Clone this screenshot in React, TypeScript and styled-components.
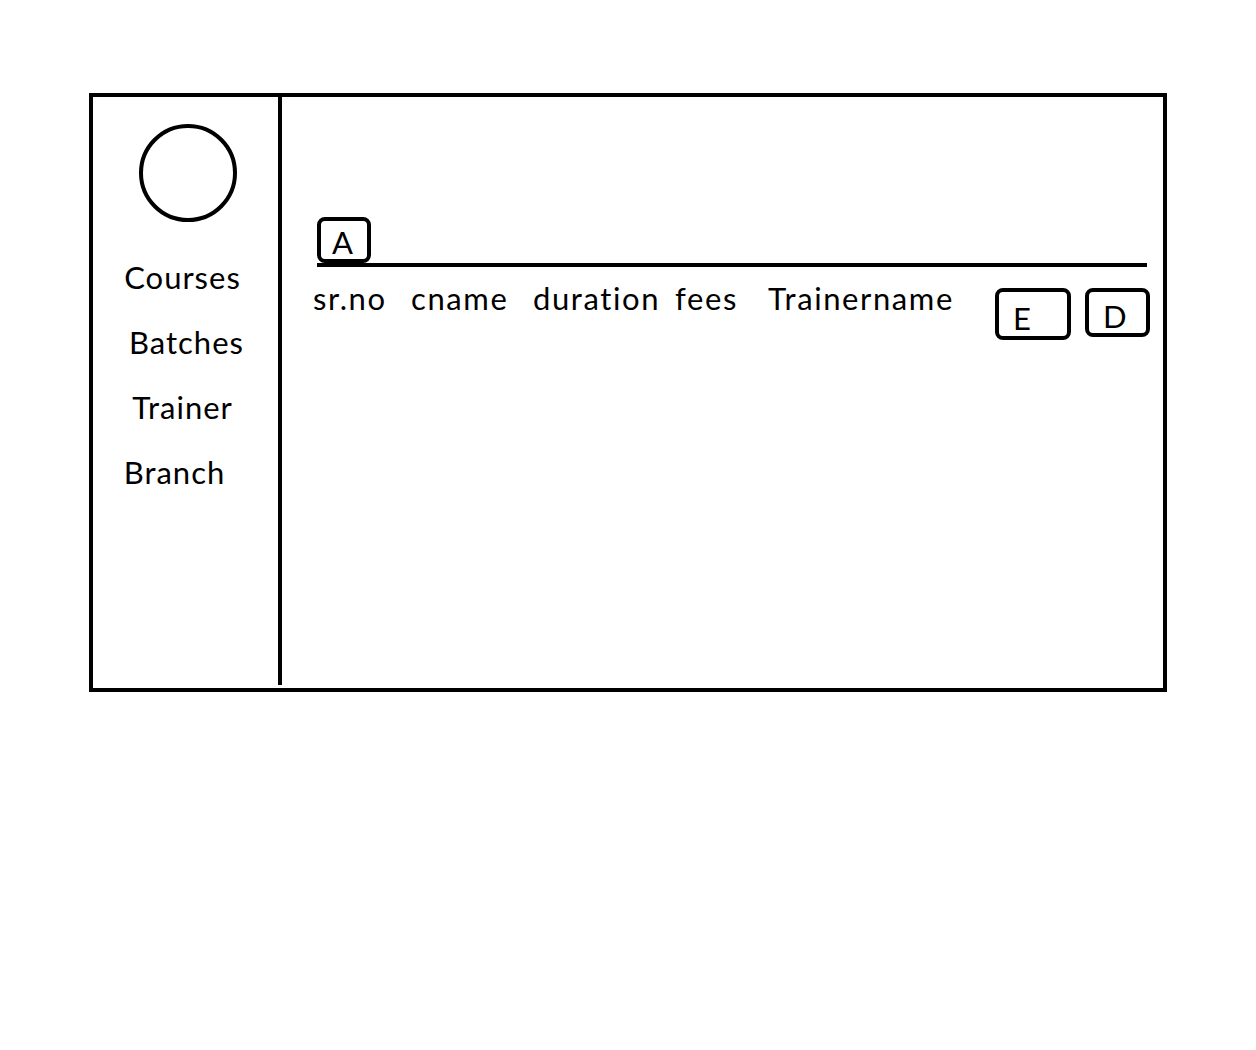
import React from 'react';
import styled, { createGlobalStyle } from 'styled-components';

const INK = '#000000';
const PAPER = '#ffffff';

const GlobalStyle = createGlobalStyle`
  html, body {
    margin: 0;
    background: ${PAPER};
  }
  body {
    font-family: Lato, "Open Sans", sans-serif;
    color: ${INK};
  }
`;

// =============================================================================
// Styled Components
// =============================================================================

const Page = styled.div`
  padding: 93px 0 0 89px;
  width: 1256px;
  height: 1050px;
  box-sizing: border-box;
`;

const Frame = styled.div`
  display: flex;
  width: 1078px;
  height: 599px;
  box-sizing: border-box;
  border: 4px solid ${INK};
`;

const Sidebar = styled.nav`
  display: flex;
  flex-direction: column;
  align-items: center;
  flex-shrink: 0;
  width: 189px;
  box-sizing: border-box;
  border-right: 4px solid ${INK};
  margin-bottom: 3px;
  padding-top: 27px;
`;

const Avatar = styled.div`
  width: 98px;
  height: 98px;
  box-sizing: border-box;
  border: 4px solid ${INK};
  border-radius: 50%;
  margin: 0 0 37px 4px;
`;

const NavItem = styled.div<{ $shift: number }>`
  font-size: 31px;
  line-height: 36px;
  letter-spacing: 1px;
  height: 65px;
  transform: translateX(${(p) => p.$shift}px);
`;

const Main = styled.main`
  flex: 1;
  min-width: 0;
  padding: 120px 16px 0 35px;
`;

const Toolbar = styled.div`
  display: flex;
  border-bottom: 4px solid ${INK};
`;

const Box = styled.button<{ $w: number; $h: number; $px: number; $py: number }>`
  display: flex;
  align-items: center;
  justify-content: flex-start;
  width: ${(p) => p.$w}px;
  height: ${(p) => p.$h}px;
  box-sizing: border-box;
  padding: ${(p) => p.$py}px 0 0 ${(p) => p.$px}px;
  border: 4px solid ${INK};
  border-radius: 8px;
  background: ${PAPER};
  color: ${INK};
  font-family: inherit;
  font-size: 31px;
  line-height: 1;
`;

const HeadRow = styled.div`
  display: grid;
  grid-template-columns: 98px 122px 142px 93px 227px 90px 65px;
  align-items: start;
  margin-left: -4px;
  padding-top: 21px;
`;

const HeadCell = styled.div`
  font-size: 31px;
  line-height: 36px;
  letter-spacing: 1.6px;
  margin-top: -8px;
`;

// =============================================================================
// Main Component
// =============================================================================

const navItems = [
  { label: 'Courses', shift: -3 },
  { label: 'Batches', shift: 1 },
  { label: 'Trainer', shift: -3 },
  { label: 'Branch', shift: -11 },
];

const columns = ['sr.no', 'cname', 'duration', 'fees', 'Trainername'];

const App = () => (
  <>
    <GlobalStyle />
    <Page>
      <Frame>
        <Sidebar>
          <Avatar />
          {navItems.map((item) => (
            <NavItem key={item.label} $shift={item.shift}>
              {item.label}
            </NavItem>
          ))}
        </Sidebar>
        <Main>
          <Toolbar>
            <Box $w={54} $h={46} $px={11} $py={4}>A</Box>
          </Toolbar>
          <HeadRow>
            {columns.map((c) => (
              <HeadCell key={c}>{c}</HeadCell>
            ))}
            <Box $w={76} $h={52} $px={14} $py={8}>E</Box>
            <Box $w={65} $h={49} $px={14} $py={8}>D</Box>
          </HeadRow>
        </Main>
      </Frame>
    </Page>
  </>
);

export default App;
